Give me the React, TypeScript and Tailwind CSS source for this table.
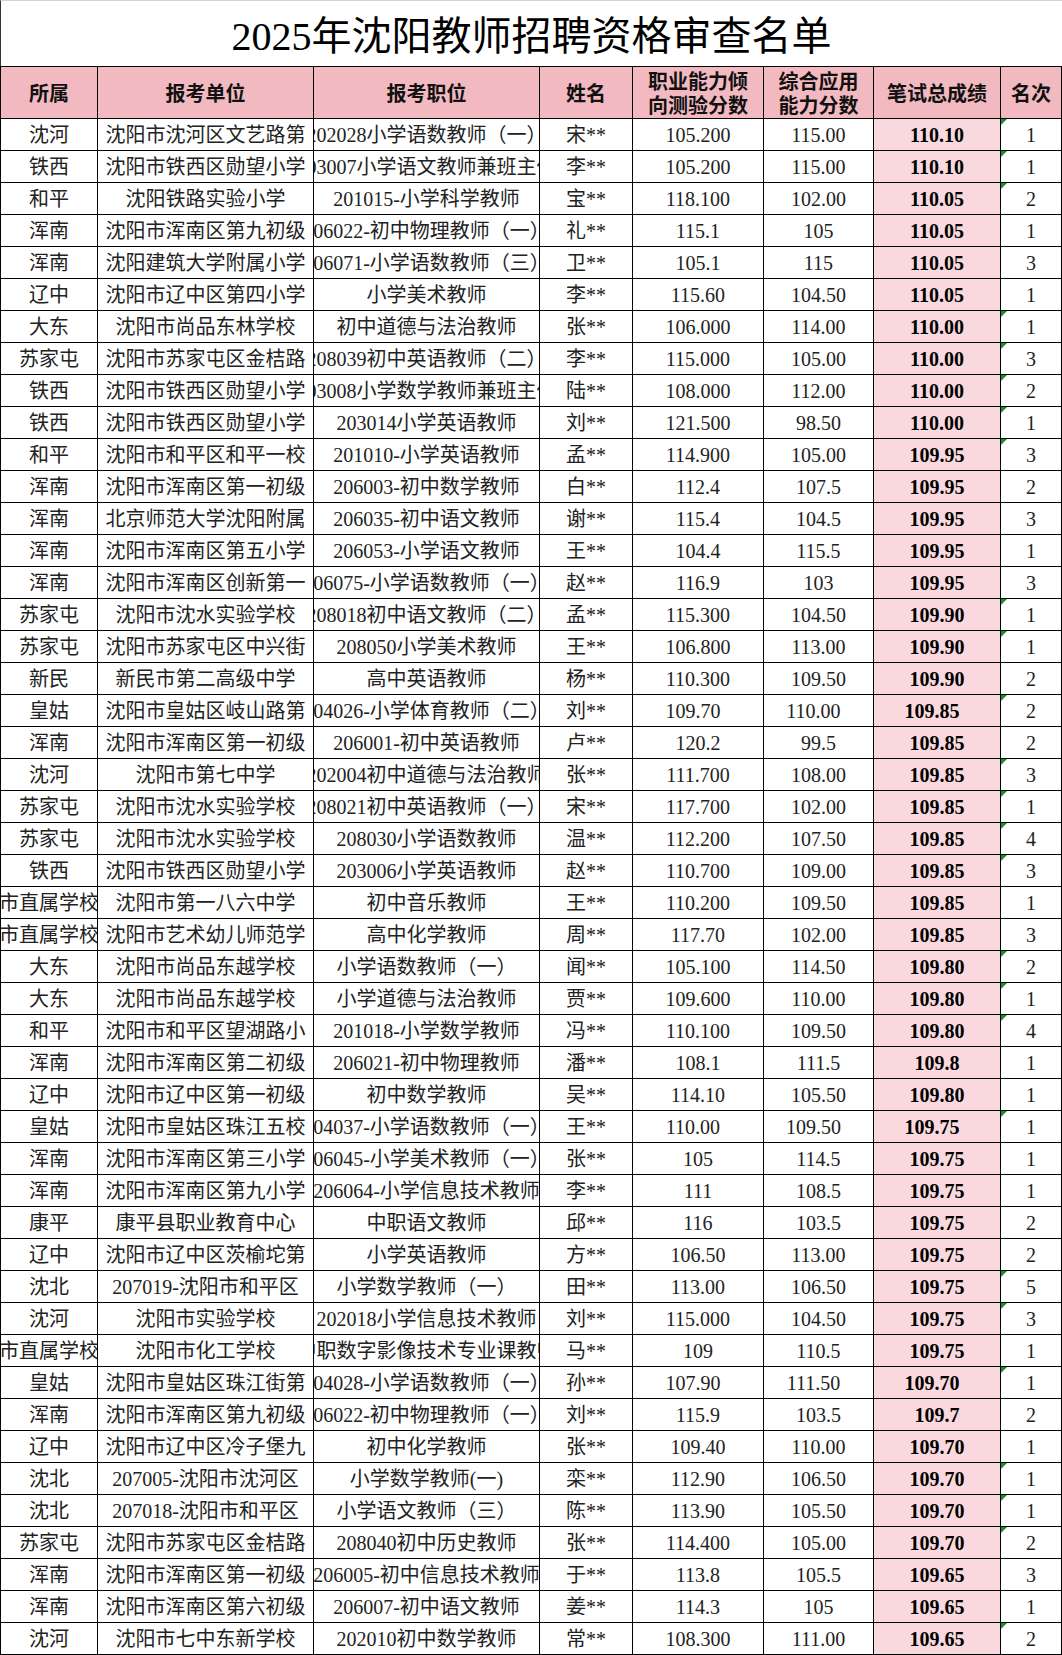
type Row = [string, string, string, string, string, string, string, string];

const rows: Row[] = [
  ["沈河", "沈阳市沈河区文艺路第", "202028小学语数教师（一）", "宋**", "105.200", "115.00", "110.10", "1"],
  ["铁西", "沈阳市铁西区勋望小学", "203007小学语文教师兼班主任", "李**", "105.200", "115.00", "110.10", "1"],
  ["和平", "沈阳铁路实验小学", "201015-小学科学教师", "宝**", "118.100", "102.00", "110.05", "2"],
  ["浑南", "沈阳市浑南区第九初级", "206022-初中物理教师（一）", "礼**", "115.1", "105", "110.05", "1"],
  ["浑南", "沈阳建筑大学附属小学", "206071-小学语数教师（三）", "卫**", "105.1", "115", "110.05", "3"],
  ["辽中", "沈阳市辽中区第四小学", "小学美术教师", "李**", "115.60", "104.50", "110.05", "1"],
  ["大东", "沈阳市尚品东林学校", "初中道德与法治教师", "张**", "106.000", "114.00", "110.00", "1"],
  ["苏家屯", "沈阳市苏家屯区金桔路", "208039初中英语教师（二）", "李**", "115.000", "105.00", "110.00", "3"],
  ["铁西", "沈阳市铁西区勋望小学", "203008小学数学教师兼班主任", "陆**", "108.000", "112.00", "110.00", "2"],
  ["铁西", "沈阳市铁西区勋望小学", "203014小学英语教师", "刘**", "121.500", "98.50", "110.00", "1"],
  ["和平", "沈阳市和平区和平一校", "201010-小学英语教师", "孟**", "114.900", "105.00", "109.95", "3"],
  ["浑南", "沈阳市浑南区第一初级", "206003-初中数学教师", "白**", "112.4", "107.5", "109.95", "2"],
  ["浑南", "北京师范大学沈阳附属", "206035-初中语文教师", "谢**", "115.4", "104.5", "109.95", "3"],
  ["浑南", "沈阳市浑南区第五小学", "206053-小学语文教师", "王**", "104.4", "115.5", "109.95", "1"],
  ["浑南", "沈阳市浑南区创新第一", "206075-小学语数教师（一）", "赵**", "116.9", "103", "109.95", "3"],
  ["苏家屯", "沈阳市沈水实验学校", "208018初中语文教师（二）", "孟**", "115.300", "104.50", "109.90", "1"],
  ["苏家屯", "沈阳市苏家屯区中兴街", "208050小学美术教师", "王**", "106.800", "113.00", "109.90", "1"],
  ["新民", "新民市第二高级中学", "高中英语教师", "杨**", "110.300", "109.50", "109.90", "2"],
  ["皇姑", "沈阳市皇姑区岐山路第", "204026-小学体育教师（二）", "刘**", "109.70", "110.00", "109.85", "2"],
  ["浑南", "沈阳市浑南区第一初级", "206001-初中英语教师", "卢**", "120.2", "99.5", "109.85", "2"],
  ["沈河", "沈阳市第七中学", "202004初中道德与法治教师", "张**", "111.700", "108.00", "109.85", "3"],
  ["苏家屯", "沈阳市沈水实验学校", "208021初中英语教师（一）", "宋**", "117.700", "102.00", "109.85", "1"],
  ["苏家屯", "沈阳市沈水实验学校", "208030小学语数教师", "温**", "112.200", "107.50", "109.85", "4"],
  ["铁西", "沈阳市铁西区勋望小学", "203006小学英语教师", "赵**", "110.700", "109.00", "109.85", "3"],
  ["市直属学校", "沈阳市第一八六中学", "初中音乐教师", "王**", "110.200", "109.50", "109.85", "1"],
  ["市直属学校", "沈阳市艺术幼儿师范学", "高中化学教师", "周**", "117.70", "102.00", "109.85", "3"],
  ["大东", "沈阳市尚品东越学校", "小学语数教师（一）", "闻**", "105.100", "114.50", "109.80", "2"],
  ["大东", "沈阳市尚品东越学校", "小学道德与法治教师", "贾**", "109.600", "110.00", "109.80", "1"],
  ["和平", "沈阳市和平区望湖路小", "201018-小学数学教师", "冯**", "110.100", "109.50", "109.80", "4"],
  ["浑南", "沈阳市浑南区第二初级", "206021-初中物理教师", "潘**", "108.1", "111.5", "109.8", "1"],
  ["辽中", "沈阳市辽中区第一初级", "初中数学教师", "吴**", "114.10", "105.50", "109.80", "1"],
  ["皇姑", "沈阳市皇姑区珠江五校", "204037-小学语数教师（一）", "王**", "110.00", "109.50", "109.75", "1"],
  ["浑南", "沈阳市浑南区第三小学", "206045-小学美术教师（一）", "张**", "105", "114.5", "109.75", "1"],
  ["浑南", "沈阳市浑南区第九小学", "206064-小学信息技术教师", "李**", "111", "108.5", "109.75", "1"],
  ["康平", "康平县职业教育中心", "中职语文教师", "邱**", "116", "103.5", "109.75", "2"],
  ["辽中", "沈阳市辽中区茨榆坨第", "小学英语教师", "方**", "106.50", "113.00", "109.75", "2"],
  ["沈北", "207019-沈阳市和平区", "小学数学教师（一）", "田**", "113.00", "106.50", "109.75", "5"],
  ["沈河", "沈阳市实验学校", "202018小学信息技术教师", "刘**", "115.000", "104.50", "109.75", "3"],
  ["市直属学校", "沈阳市化工学校", "中职数字影像技术专业课教师", "马**", "109", "110.5", "109.75", "1"],
  ["皇姑", "沈阳市皇姑区珠江街第", "204028-小学语数教师（一）", "孙**", "107.90", "111.50", "109.70", "1"],
  ["浑南", "沈阳市浑南区第九初级", "206022-初中物理教师（一）", "刘**", "115.9", "103.5", "109.7", "2"],
  ["辽中", "沈阳市辽中区冷子堡九", "初中化学教师", "张**", "109.40", "110.00", "109.70", "1"],
  ["沈北", "207005-沈阳市沈河区", "小学数学教师(一)", "栾**", "112.90", "106.50", "109.70", "1"],
  ["沈北", "207018-沈阳市和平区", "小学语文教师（三）", "陈**", "113.90", "105.50", "109.70", "1"],
  ["苏家屯", "沈阳市苏家屯区金桔路", "208040初中历史教师", "张**", "114.400", "105.00", "109.70", "2"],
  ["浑南", "沈阳市浑南区第一初级", "206005-初中信息技术教师", "于**", "113.8", "105.5", "109.65", "3"],
  ["浑南", "沈阳市浑南区第六初级", "206007-初中语文教师", "姜**", "114.3", "105", "109.65", "1"],
  ["沈河", "沈阳市七中东新学校", "202010初中数学教师", "常**", "108.300", "111.00", "109.65", "2"],
];

// districts whose rank was stored as text (little green corner in the sheet)
const flagged = ["沈河", "铁西", "和平", "大东", "苏家屯", "沈北", "皇姑"];

const grid = "grid grid-cols-[98px_216px_226px_93px_131px_110px_127px_61px]";
const cell = "flex items-center justify-center overflow-hidden whitespace-nowrap border-r border-black";

const Cell = ({ children, className = "" }: { children: React.ReactNode; className?: string }) => (
  <div className={`${cell} ${className}`}>
    <span className="shrink-0">{children}</span>
  </div>
);

const TwoLine = ({ a, b }: { a: string; b: string }) => (
  <div className={`${cell} flex-col`}>
    <span className="block leading-[24px]">{a}</span>
    <span className="block leading-[24px]">{b}</span>
  </div>
);

export default function App() {
  return (
    <div className="w-[1062px] bg-white font-['Liberation_Serif','Noto_Sans_CJK_SC',serif] text-[20px] leading-none text-[#222]">
      <div className="flex h-[66px] items-center justify-center border-t border-l border-t-[#d4d4d4] border-l-[#333] pt-[6px]">
        <h1 className="text-[40px] text-black">2025年沈阳教师招聘资格审查名单</h1>
      </div>

      <div className={`${grid} h-[53px] border-y border-black bg-[#f2b9c1] font-['Noto_Sans_CJK_SC',sans-serif] font-bold text-[#111]`}>
        <Cell className="border-l">所属</Cell>
        <Cell>报考单位</Cell>
        <Cell>报考职位</Cell>
        <Cell>姓名</Cell>
        <TwoLine a="职业能力倾" b="向测验分数" />
        <TwoLine a="综合应用" b="能力分数" />
        <Cell>笔试总成绩</Cell>
        <Cell>名次</Cell>
      </div>

      {rows.map((r, i) => {
        const shift = r[0] === "皇姑" ? "pr-[10px]" : "";
        return (
          <div key={i} className={`${grid} h-[32px] border-b border-black`}>
            <Cell className="border-l">{r[0]}</Cell>
            <Cell>{r[1]}</Cell>
            <Cell>{r[2]}</Cell>
            <Cell>{r[3]}</Cell>
            <Cell className={shift}>{r[4]}</Cell>
            <Cell className={shift}>{r[5]}</Cell>
            <Cell className={`bg-[#f9d9dd] font-bold text-black ${shift}`}>{r[6]}</Cell>
            <div className={`${cell} relative`}>
              {flagged.includes(r[0]) && (
                <div className="absolute top-0 left-0 h-0 w-0 border-t-[6px] border-r-[6px] border-t-[#1f8a3a] border-r-transparent" />
              )}
              <span className="shrink-0">{r[7]}</span>
            </div>
          </div>
        );
      })}
    </div>
  );
}
